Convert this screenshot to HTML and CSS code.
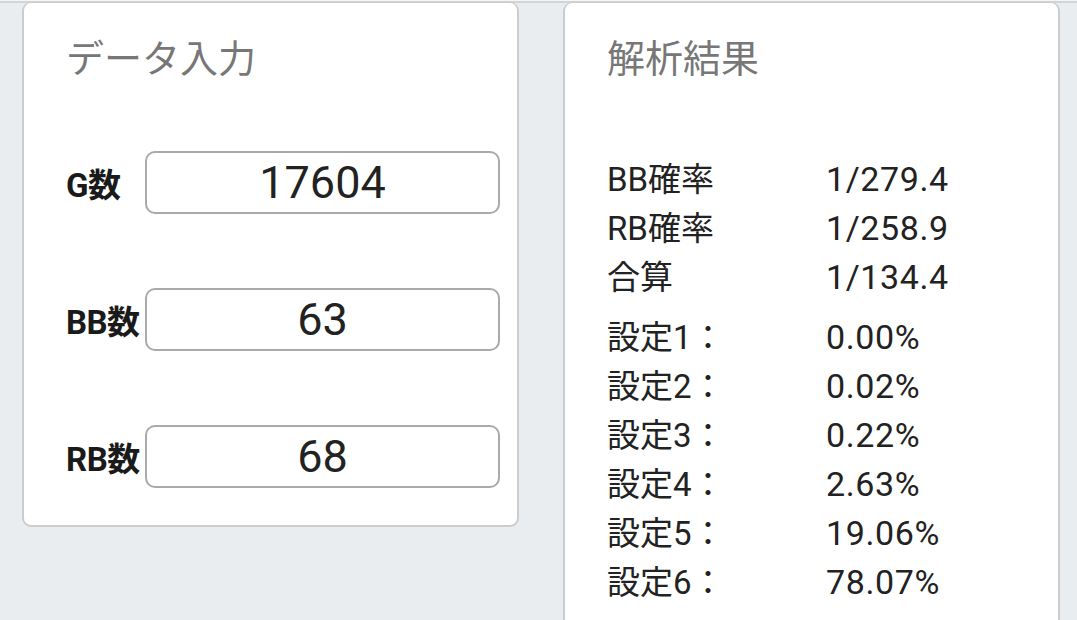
FILE: index.html
```html
<!DOCTYPE html>
<html lang="ja">
<head>
    <meta charset="UTF-8">
    <meta name="viewport" content="width=device-width, initial-scale=1.0">
    <title>設定判別</title>
    <link rel="stylesheet" href="styles.css">
</head>
<body>
    <div class="topbar"></div>
    <div class="panels">
        <section class="card">
            <h2 class="card-title">データ入力</h2>
            <div class="fields">
                <div class="field">
                    <label for="games">G数</label>
                    <input id="games" type="text" value="17604">
                </div>
                <div class="field">
                    <label for="bb">BB数</label>
                    <input id="bb" type="text" value="63">
                </div>
                <div class="field">
                    <label for="rb">RB数</label>
                    <input id="rb" type="text" value="68">
                </div>
            </div>
        </section>

        <section class="card result-card">
            <h2 class="card-title">解析結果</h2>
            <div class="rates">
                <div class="row"><span class="key">BB確率</span><span class="val">1/279.4</span></div>
                <div class="row"><span class="key">RB確率</span><span class="val">1/258.9</span></div>
                <div class="row"><span class="key">合算</span><span class="val">1/134.4</span></div>
            </div>
            <div class="settings">
                <div class="row"><span class="key">設定1：</span><span class="val">0.00%</span></div>
                <div class="row"><span class="key">設定2：</span><span class="val">0.02%</span></div>
                <div class="row"><span class="key">設定3：</span><span class="val">0.22%</span></div>
                <div class="row"><span class="key">設定4：</span><span class="val">2.63%</span></div>
                <div class="row"><span class="key">設定5：</span><span class="val">19.06%</span></div>
                <div class="row"><span class="key">設定6：</span><span class="val">78.07%</span></div>
            </div>
        </section>
    </div>
</body>
</html>
```

FILE: styles.css
```css
body {
    margin: 0;
    height: 620px;
    overflow: hidden;
    background: #e9edf0;
    font-family: Roboto, "Noto Sans CJK JP", sans-serif;
    color: #222;
}
.topbar {
    height: 1px;
    background: #f3f5f6;
    border-bottom: 2px solid #d2d4d5;
}
.panels {
    display: flex;
    align-items: flex-start;
    gap: 44px;
    padding-left: 22px;
}
.card {
    width: 497px;
    box-sizing: border-box;
    background: #fff;
    border: 2px solid #cbcccd;
    border-top-width: 1px;
    border-radius: 9px;
    margin-top: -1px;
    padding: 33px 17px 37px 42px;
}
.card-title {
    margin: 0;
    font-size: 38px;
    font-weight: 400;
    line-height: 46px;
    color: #777;
}
.fields {
    margin-top: 69px;
    display: flex;
    flex-direction: column;
    gap: 74px;
}
.field {
    display: flex;
    align-items: center;
    height: 63px;
}
.field label {
    width: 79px;
    flex-shrink: 0;
    font-size: 33px;
    font-weight: 700;
    color: #1a1a1a;
    letter-spacing: -0.5px;
}
.field input {
    width: 355px;
    height: 63px;
    box-sizing: border-box;
    margin: 0;
    padding: 0;
    border: 2px solid #aaa;
    border-radius: 10px;
    background: #fff;
    font-family: Roboto, sans-serif;
    font-size: 45px;
    color: #222;
    text-align: center;
}
.result-card {
    padding-bottom: 40px;
}
.rates {
    margin-top: 73px;
}
.settings {
    margin-top: 11px;
}
.row {
    display: flex;
    align-items: baseline;
    font-size: 32px;
    line-height: 48px;
}
.settings .row {
    line-height: 49px;
}
.key {
    width: 219px;
    flex-shrink: 0;
    font-size: 33px;
}
.val {
    font-size: 34px;
    letter-spacing: 0.6px;
}
```
